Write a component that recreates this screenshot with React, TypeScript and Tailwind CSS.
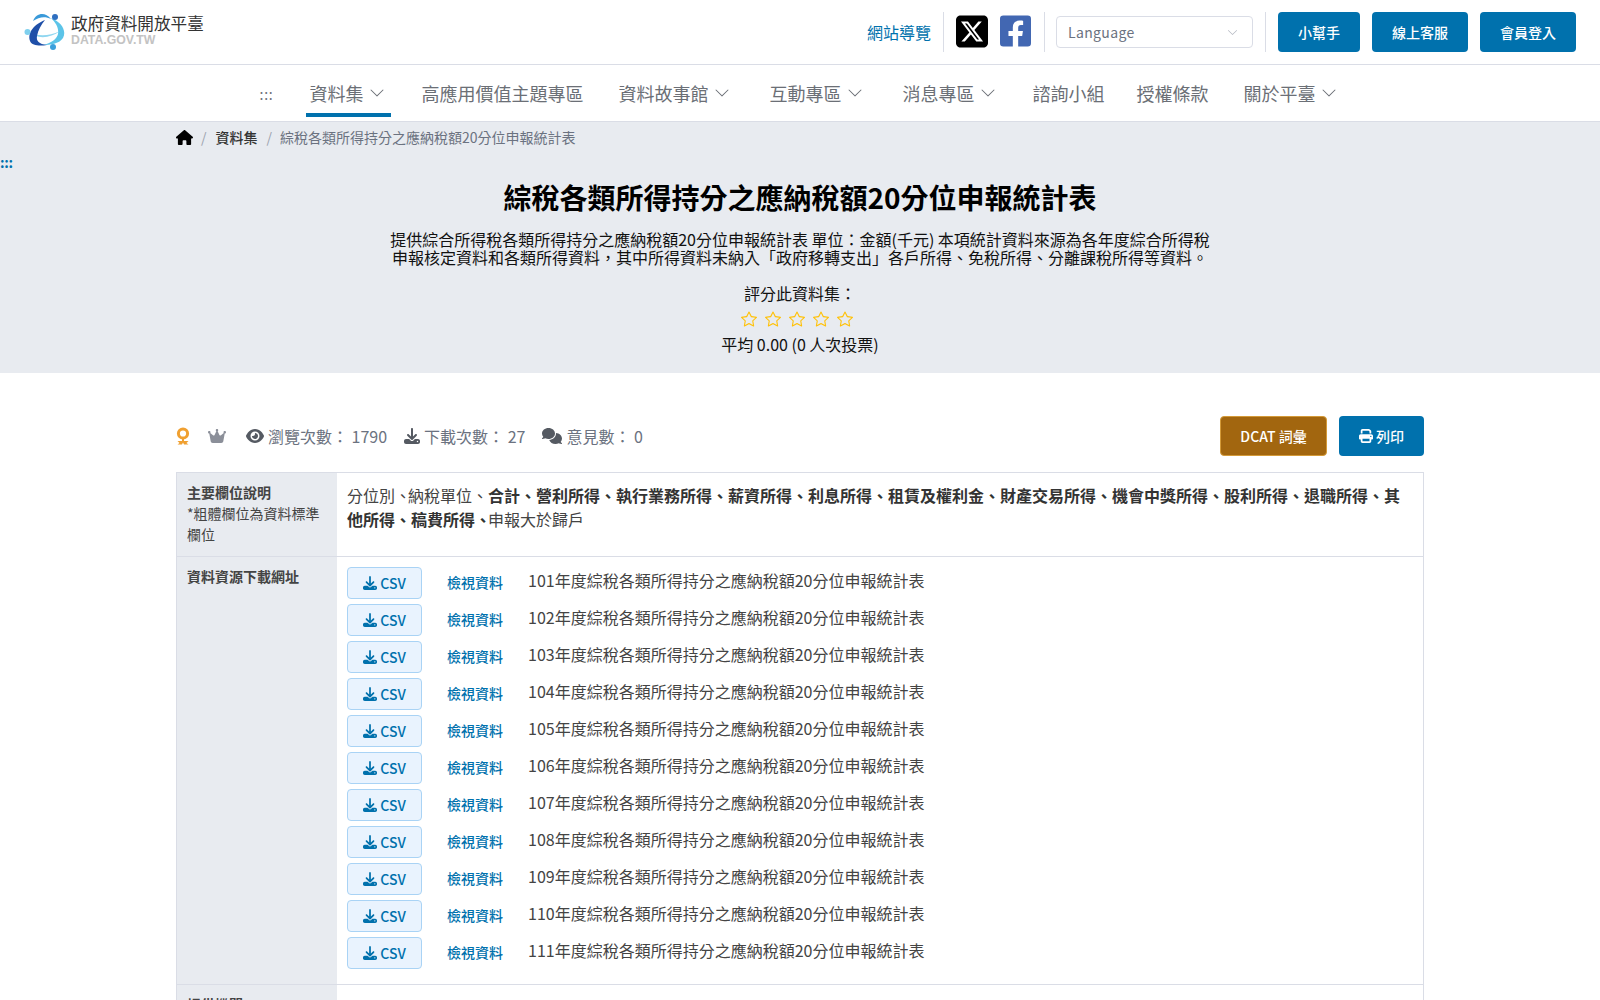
import { FaFacebookSquare } from 'react-icons/fa';
import { FaComments, FaCrown, FaDownload, FaEye, FaHouse, FaPrint, FaSquareXTwitter } from 'react-icons/fa6';
import { BsChevronDown, BsStar } from 'react-icons/bs';

const navItems = [
    { label: '資料集', caret: true, active: true, cls: 'ml-[33px] pl-[3px] pr-[6px]' },
    { label: '高應用價值主題專區', caret: false, active: false, cls: 'ml-[27px] px-[3px]' },
    { label: '資料故事館', caret: true, active: false, cls: 'ml-[29px] px-[3px]' },
    { label: '互動專區', caret: true, active: false, cls: 'ml-[33px] px-[3px]' },
    { label: '消息專區', caret: true, active: false, cls: 'ml-[33px] px-[3px]' },
    { label: '諮詢小組', caret: false, active: false, cls: 'ml-[30px] px-[3px]' },
    { label: '授權條款', caret: false, active: false, cls: 'ml-[26px] px-[3px]' },
    { label: '關於平臺', caret: true, active: false, cls: 'ml-[29px] px-[3px]' },
];

const years = ['101', '102', '103', '104', '105', '106', '107', '108', '109', '110', '111'];

function Logo() {
    return (
        <svg width="42" height="40" viewBox="0 0 42 40" className="shrink-0">
            <path d="M5 20 C12 24 24 25 36 19 C26 27 12 27 5 20 Z" fill="#8fd6f0" />
            <path d="M27 6 C37 10 43 18 39 26 C35 32 26 33 19 33 C27 31 33 27 34 22 C35 16 32 11 27 6 Z" fill="#5cc4e8" />
            <path d="M21 8 C11 12 3 20 6 29 C8 34 16 34 23 33 C15 32 12 29 13 24 C14 18 17 13 21 8 Z" fill="#1f4fa8" />
            <path d="M9 9 C12 1 21 -1 27 7 C21 4 15 5 9 9 Z" fill="#3a9ad9" />
            <circle cx="31" cy="5" r="3" fill="#2f6fc0" />
            <circle cx="3.5" cy="20" r="3" fill="#7fd0ee" />
            <circle cx="29" cy="35" r="3" fill="#3aa0dc" />
        </svg>
    );
}

function Medal() {
    return (
        <svg width="14" height="18" viewBox="0 0 14 18" className="shrink-0">
            <circle cx="7" cy="6.5" r="4.6" fill="none" stroke="#f0a030" strokeWidth="3" />
            <path d="M6 12 L6 14 L1.5 14 L3.5 16 L1.5 17.5 L6 17.5 L7 15.5 L8 17.5 L12.5 17.5 L10.5 16 L12.5 14 L8 14 L8 12 Z" fill="#f0a030" />
        </svg>
    );
}

function Header() {
    return (
        <header className="h-[65px] border-b border-[#dadde6] flex items-center justify-between pl-6 pr-6">
            <div className="flex items-center gap-[5px]">
                <Logo />
                <div className="flex flex-col mb-1">
                    <span className="text-[16.6px] leading-[20px] text-[#333] whitespace-nowrap">政府資料開放平臺</span>
                    <span className="text-[12.3px] leading-[14px] font-bold text-[#c3c3c3] font-['Liberation_Sans',sans-serif]">DATA.GOV.TW</span>
                </div>
            </div>
            <div className="flex items-center h-10">
                <a className="text-base text-[#0071ad] mr-[12px]">網站導覽</a>
                <div className="w-px h-10 bg-[#dadde6]" />
                <FaSquareXTwitter className="w-8 h-[37px] text-black ml-3 mb-[2px]" />
                <FaFacebookSquare className="w-[31px] h-9 text-[#4267b2] ml-3 mb-[2px]" />
                <div className="w-px h-10 bg-[#dadde6] ml-[13px]" />
                <div className="w-[197px] h-8 ml-[11px] border border-[#dadde6] rounded flex items-center justify-between pl-[11px] pr-[14px] text-sm text-[#6b7280] tracking-wide">
                    Language
                    <BsChevronDown className="w-[11px] h-[11px] text-[#b3b7c0]" />
                </div>
                <div className="w-px h-10 bg-[#dadde6] ml-3" />
                <div className="flex gap-3 ml-3 text-sm font-medium text-white">
                    <button className="w-[82px] h-10 rounded bg-[#0071ad]">小幫手</button>
                    <button className="w-24 h-10 rounded bg-[#0071ad]">線上客服</button>
                    <button className="w-24 h-10 rounded bg-[#0071ad]">會員登入</button>
                </div>
            </div>
        </header>
    );
}

function Nav() {
    return (
        <nav className="h-[57px] border-b border-[#dadde6] flex justify-center text-[18px] text-[#6b6f76]">
            <span className="leading-[58px] text-sm tracking-wider">:::</span>
            {navItems.map((item) => (
                <a
                    key={item.label}
                    className={`${item.cls} h-[52px] flex items-center gap-[6px] pt-[8px] border-b-4 ${item.active ? 'border-[#0071ad]' : 'border-transparent'}`}
                >
                    {item.label}
                    {item.caret && <BsChevronDown className="w-4 h-4 text-[#6b6f76]" />}
                </a>
            ))}
        </nav>
    );
}

function Hero() {
    return (
        <section className="h-[251px] bg-[#e8ebf0] relative">
            <a className="absolute left-0 top-[30px] text-sm font-bold leading-5 text-[#0071ad] tracking-tight">:::</a>
            <div className="w-[1248px] mx-auto h-[30px] flex items-center text-sm">
                <FaHouse className="w-[17px] h-[17px] text-black" />
                <span className="ml-2 mr-[9px] text-[#9ca3af]">/</span>
                <span className="font-medium text-[#333]">資料集</span>
                <span className="ml-[9px] mr-2 text-[#9ca3af]">/</span>
                <span className="text-[#6b7280]">綜稅各類所得持分之應納稅額20分位申報統計表</span>
            </div>
            <div className="flex flex-col items-center text-black">
                <h1 className="mt-[24px] text-[28px] leading-[42px] font-bold">綜稅各類所得持分之應納稅額20分位申報統計表</h1>
                <p className="mt-[12px] w-[840px] text-center text-base leading-[18px] text-[#111]">
                    提供綜合所得稅各類所得持分之應納稅額20分位申報統計表 單位：金額(千元) 本項統計資料來源為各年度綜合所得稅
                    <br />
                    申報核定資料和各類所得資料，其中所得資料未納入「政府移轉支出」各戶所得、免稅所得、分離課稅所得等資料。
                </p>
                <div className="mt-[15px] text-base leading-6 text-[#111]">評分此資料集：</div>
                <div className="mt-[6px] pr-[6px] flex gap-[8px] text-[#ffc107]">
                    <BsStar className="w-4 h-4" />
                    <BsStar className="w-4 h-4" />
                    <BsStar className="w-4 h-4" />
                    <BsStar className="w-4 h-4" />
                    <BsStar className="w-4 h-4" />
                </div>
                <div className="mt-[5px] text-base leading-6 text-[#111]">平均 0.00 (0 人次投票)</div>
            </div>
        </section>
    );
}

function StatsBar() {
    return (
        <div className="mt-[43px] h-10 flex items-center justify-between">
            <div className="flex items-center text-base text-[#6b7280]">
                <Medal />
                <FaCrown className="w-[18px] h-[16px] text-[#8b8f99] ml-[18px]" />
                <FaEye className="w-[18px] h-[18px] text-[#555a62] ml-5" />
                <span className="ml-1">瀏覽次數： 1790</span>
                <FaDownload className="w-4 h-4 text-[#555a62] ml-[17px]" />
                <span className="ml-1">下載次數： 27</span>
                <FaComments className="w-5 h-5 text-[#555a62] ml-[17px]" />
                <span className="ml-1">意見數： 0</span>
            </div>
            <div className="flex gap-3 text-sm font-medium text-white">
                <button className="w-[107px] h-10 rounded bg-[#a2660f] border border-[#d49a38]">DCAT 詞彙</button>
                <button className="w-[85px] h-10 rounded bg-[#0071ad] flex items-center justify-center gap-[3px]">
                    <FaPrint className="w-[14px] h-[14px]" />
                    列印
                </button>
            </div>
        </div>
    );
}

function ResourceRow({ year }: { year: string }) {
    return (
        <div className="h-8 flex items-start">
            <a className="w-[75px] h-8 rounded border border-[#a9d3f5] bg-[#e9f3fe] flex items-center justify-center gap-[3px] text-sm font-medium text-[#0071ad]">
                <FaDownload className="w-[14px] h-[14px]" />
                CSV
            </a>
            <a className="ml-[25px] mt-[3px] text-sm font-medium leading-6 text-[#0071ad]">檢視資料</a>
            <span className="ml-[25px] mt-[1px] text-base leading-6 text-[#444]">{year}年度綜稅各類所得持分之應納稅額20分位申報統計表</span>
        </div>
    );
}

function DataTable() {
    return (
        <div className="mt-[16px] border border-[#dadde6] grid grid-cols-[160px_1fr]">
            <div className="h-[83px] bg-[#e8ebf0] px-[10px] pt-[9px] text-sm leading-[21px] text-[#444]">
                <div className="font-bold">主要欄位說明</div>
                <div>*粗體欄位為資料標準欄位</div>
            </div>
            <div className="px-[10px] pt-[10px] text-base leading-6 text-[#444]">
                分位別<span className="tracking-[-3px]">、</span>納稅單位、<b className="text-[#333]">合計、營利所得、執行業務所得、薪資所得、利息所得、租賃及權利金、財產交易所得、機會中獎所得、股利所得、退職所得、其他所得、稿費所得<span className="tracking-[-3px]">、</span></b>申報大於歸戶
            </div>
            <div className="h-[428px] bg-[#e8ebf0] border-t border-[#dadde6] px-[10px] pt-[9px] text-sm leading-[21px] font-bold text-[#444]">資料資源下載網址</div>
            <div className="border-t border-[#dadde6] px-[10px] pt-[10px] flex flex-col gap-[5px]">
                {years.map((y) => (
                    <ResourceRow key={y} year={y} />
                ))}
            </div>
            <div className="h-10 bg-[#e8ebf0] border-t border-[#dadde6] px-[10px] pt-[9px] text-sm leading-[21px] font-bold text-[#444]">提供機關</div>
            <div className="border-t border-[#dadde6]" />
        </div>
    );
}

export default function App() {
    return (
        <div className="h-screen overflow-hidden bg-white font-['Noto_Sans_CJK_TC',sans-serif]">
            <Header />
            <Nav />
            <Hero />
            <main className="w-[1248px] mx-auto">
                <StatsBar />
                <DataTable />
            </main>
        </div>
    );
}
